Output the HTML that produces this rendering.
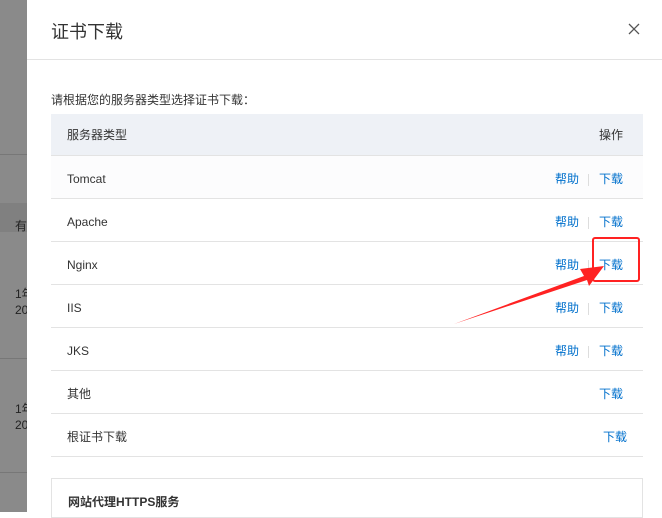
<!DOCTYPE html>
<html><head><meta charset="utf-8"><style>
*{margin:0;padding:0;box-sizing:border-box}
body{width:662px;height:512px;overflow:hidden;position:relative;background:#fff;font-family:"Liberation Sans","Noto Sans CJK SC",sans-serif;font-size:12px;color:#333}
.ov{position:absolute;left:0;top:0;width:27px;height:512px;background:#8a8a8a;overflow:hidden}
.ov div{position:absolute;left:0;width:27px}
.ov span{position:absolute;left:15px;color:#222;font-size:12px;white-space:nowrap}
.modal{position:absolute;left:27px;top:0;width:635px;height:512px;background:#fff}
.t{position:absolute;left:24px;top:18px;font-size:18px;color:#333}
.x{position:absolute;right:22px;top:23px}
.hl{position:absolute;left:0;right:0;top:59px;border-top:1px solid #e3e3e3}
.d{position:absolute;left:24px;top:91px;color:#333}
.row{position:absolute;left:24px;width:592px;height:43px;border-bottom:1px solid #e3e3e3;line-height:46px;padding-left:16px}
.row .r{position:absolute;right:20px;top:0;color:#0070cc}
.row .sep{display:inline-block;width:1px;height:12px;background:#ddd;vertical-align:middle;margin:0 10px 0 9px}
.hd{background:#eef1f6;top:114px}
.hd .r{color:#333}
.box{position:absolute;left:24px;top:478px;width:592px;height:40px;border:1px solid #e3e3e3;padding:14px 0 0 16px;font-weight:bold;color:#333}
</style></head><body>
<div class="ov">
<div style="top:154px;border-top:1px solid #777"></div>
<div style="top:203px;height:29px;background:#808080"></div>
<div style="top:358px;border-top:1px solid #777"></div>
<div style="top:472px;border-top:1px solid #777"></div>
<span style="top:217px">有</span>
<span style="top:285px">1年</span><span style="top:303px">20</span>
<span style="top:400px">1年</span><span style="top:418px">20</span>
</div>
<div class="modal">
<div class="t">证书下载</div>
<svg class="x" width="12" height="12" viewBox="0 0 12 12"><path d="M1 1L11 11M11 1L1 11" stroke="#555" stroke-width="1.3"/></svg>
<div class="hl"></div>
<div class="d">请根据您的服务器类型选择证书下载：</div>
<div class="row hd" style="height:42px;line-height:43px">服务器类型<span class="r">操作</span></div>
<div class="row" style="top:156px;background:#fcfcfd">Tomcat<span class="r">帮助<i class="sep"></i>下载</span></div>
<div class="row" style="top:199px">Apache<span class="r">帮助<i class="sep"></i>下载</span></div>
<div class="row" style="top:242px">Nginx<span class="r">帮助<i class="sep"></i>下载</span></div>
<div class="row" style="top:285px">IIS<span class="r">帮助<i class="sep"></i>下载</span></div>
<div class="row" style="top:328px">JKS<span class="r">帮助<i class="sep"></i>下载</span></div>
<div class="row" style="top:371px">其他<span class="r">下载</span></div>
<div class="row" style="top:414px">根证书下载<span class="r" style="right:16px">下载</span></div>
<div class="box">网站代理HTTPS服务</div>
</div>
<div style="position:absolute;left:592px;top:237px;width:48px;height:45px;border:2.5px solid #f22;border-radius:3px"></div>
<svg style="position:absolute;left:0;top:0" width="662" height="512"><path d="M454 324L584 276L580 269L604 266L589 286L587 280Z" fill="#f22"/></svg>
</body></html>
